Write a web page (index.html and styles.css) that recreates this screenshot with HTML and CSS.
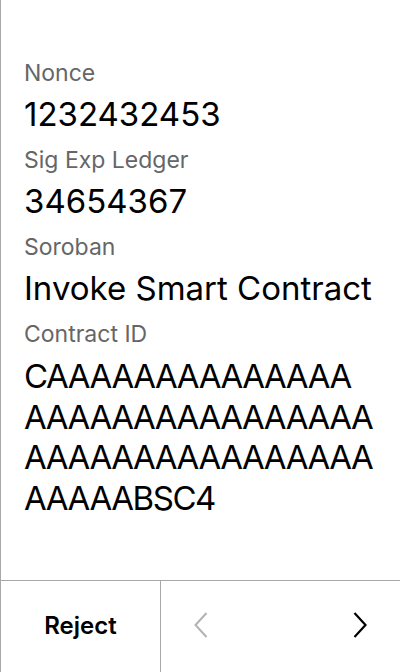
FILE: index.html
```html
<!DOCTYPE html>
<html>
<head>
<meta charset="utf-8">
<link rel="stylesheet" href="styles.css">
</head>
<body>
<div class="screen">
  <main class="content">
    <div class="field">
      <div class="label">Nonce</div>
      <div class="value">1232432453</div>
    </div>
    <div class="field">
      <div class="label">Sig Exp Ledger</div>
      <div class="value">34654367</div>
    </div>
    <div class="field">
      <div class="label">Soroban</div>
      <div class="value">Invoke Smart Contract</div>
    </div>
    <div class="field">
      <div class="label">Contract ID</div>
      <div class="value address">C<!---->AAAAA<!---->AAAAA<!---->AAAA<wbr>AAAAA<!---->AAAAA<!---->AAAAA<!---->A<wbr>AAAAA<!---->AAAAA<!---->AAAAA<!---->A<wbr>AAAAA<!---->BSC4</div>
    </div>
  </main>
  <footer class="actions">
    <button class="reject">Reject</button>
    <div class="nav">
      <button class="chev prev" aria-label="Previous">
        <svg width="14" height="26" viewBox="0 0 14 26"><path d="M12.5 1 L1.5 13 L12.5 25" fill="none" stroke="#b3b3b3" stroke-width="2"/></svg>
      </button>
      <button class="chev next" aria-label="Next">
        <svg width="14" height="26" viewBox="0 0 14 26"><path d="M1.5 1 L12.5 13 L1.5 25" fill="none" stroke="#000" stroke-width="2.2"/></svg>
      </button>
    </div>
  </footer>
</div>
</body>
</html>
```
FILE: styles.css
```css
html, body {
  margin: 0;
  padding: 0;
  background: #fff;
}
body {
  font-family: Inter, "Noto Sans", sans-serif;
  color: #000;
}
.screen {
  width: 400px;
  height: 672px;
  box-sizing: border-box;
  border-left: 1px solid #a8a8a8;
  display: flex;
  flex-direction: column;
}
.content {
  flex: 1;
  padding: 59px 24px 0 23px;
}
.field {
  display: flex;
  flex-direction: column;
  gap: 7px;
  margin-bottom: 11px;
}
.label {
  font-size: 23px;
  line-height: 28px;
  color: #666666;
}
.value {
  font-size: 33px;
  line-height: 41px;
  color: #000;
}
.address {
  overflow-wrap: anywhere;
  line-height: 40.5px;
  letter-spacing: -1.45px;
  margin-top: 1px;
}
.actions {
  height: 92px;
  border-top: 1px solid #a8a8a8;
  box-sizing: border-box;
  display: flex;
  padding-bottom: 3px;
}
.reject {
  width: 160px;
  border: 0;
  border-right: 1px solid #a8a8a8;
  margin-bottom: -3px;
  padding: 0 0 3px 0;
  background: none;
  font-family: Inter, sans-serif;
  font-size: 24px;
  font-weight: 600;
  color: #000;
}
.nav {
  flex: 1;
  display: flex;
  justify-content: space-between;
}
.chev {
  width: 80px;
  border: 0;
  background: none;
  padding: 0;
  display: flex;
  align-items: center;
  justify-content: center;
}
```
